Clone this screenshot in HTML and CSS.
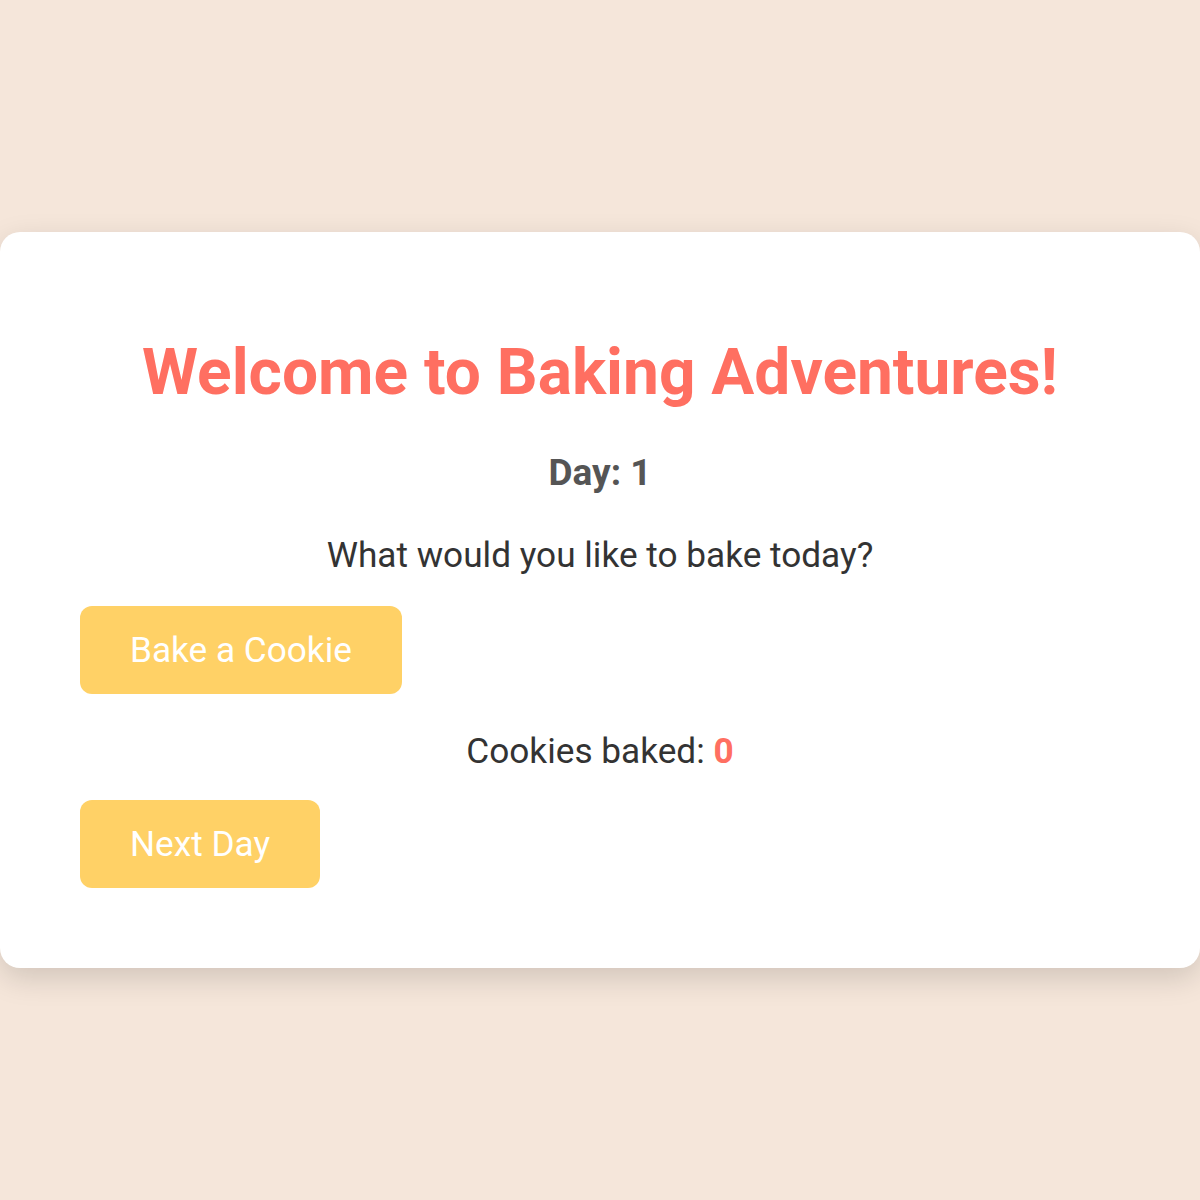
FILE: index.html
```html
<!DOCTYPE html>
<html lang="en">
<head>
  <meta charset="UTF-8" />
  <title>Baking Adventures</title>
  <link rel="stylesheet" href="styles.css">
</head>
<body>

  <div class="game-box">
    <h1>Welcome to Baking Adventures!</h1>
    <div class="day">Day: <span id="day">1</span></div>

    <p class="prompt">What would you like to bake today?</p>
    <button onclick="bakeCookie()">Bake a Cookie</button>

    <p class="count">Cookies baked: <span id="cookies">0</span></p>
    <button onclick="nextDay()">Next Day</button>
  </div>

  <script>
    let day = 1, cookies = 0;

    function bakeCookie() {
      cookies++;
      document.getElementById('cookies').textContent = cookies;
    }

    function nextDay() {
      day++;
      document.getElementById('day').textContent = day;
    }
  </script>
</body>
</html>
```

FILE: styles.css
```css
body {
  font-family: Roboto, "Liberation Sans", sans-serif;
  background: #f5e6da;
  margin: 0;
  min-height: 100vh;
  display: flex;
  align-items: center;
  justify-content: center;
}
.game-box {
  background: white;
  border-radius: 20px;
  padding: 80px;
  width: 100%;
  box-shadow: 0 10px 30px rgba(0, 0, 0, 0.15);
  text-align: center;
}
h1 {
  color: #ff6f61;
  font-size: 64px;
  margin: 23px 0 41px;
}
.day {
  color: #555;
  font-size: 37px;
  font-weight: bold;
}
.prompt,
.count {
  color: #333;
  font-size: 35.2px;
}
.prompt {
  margin: 40px 0 30px;
}
.count {
  margin: 36px 0 28px;
}
#cookies {
  color: #ff6f61;
  font-weight: bold;
}
button {
  display: block;
  background-color: #ffd166;
  color: white;
  font-family: inherit;
  font-size: 35.2px;
  padding: 23px 50px;
  border: none;
  border-radius: 12px;
  cursor: pointer;
}
```
